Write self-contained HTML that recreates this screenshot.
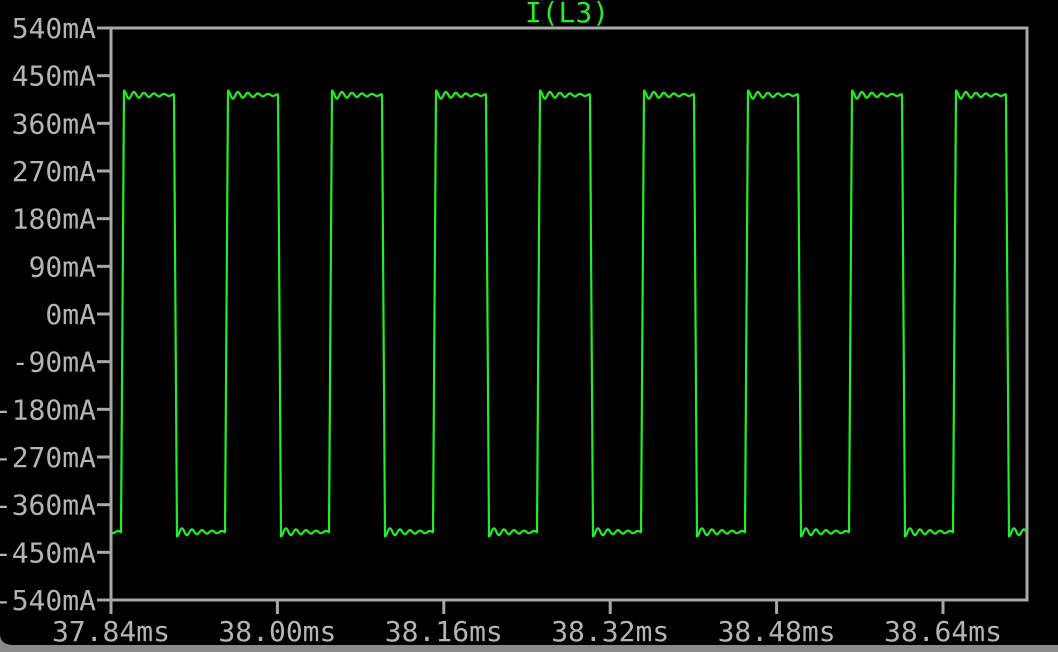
<!DOCTYPE html>
<html><head><style>
html,body{margin:0;padding:0;background:#000;width:1058px;height:652px;overflow:hidden}
svg{display:block}
text{font-family:"DejaVu Sans Mono","Liberation Mono",monospace;font-size:28px;fill:#b4b4b4}
</style></head><body>
<svg width="1058" height="652" viewBox="0 0 1058 652" xmlns="http://www.w3.org/2000/svg">
<rect width="1058" height="652" fill="#000"/>
<path d="M0 645 L1058 645 L1058 652 L0 652 Z" fill="#8a8a8a"/>
<path d="M0 634 Q0 645 14 645 L0 645 Z" fill="#8a8a8a"/>
<text x="567" y="22" text-anchor="middle" style="fill:#22ee22">I(L3)</text>
<g id="ax" stroke="#a8a8a8" stroke-width="3" fill="none">
<rect x="111" y="28" width="916" height="572"/>
</g>
<g id="yl" text-anchor="end"></g>
<g id="xl" text-anchor="middle"></g>
<path id="w" fill="none" stroke="#22ee22" stroke-width="2.2" stroke-linejoin="round"/>
</svg>
<script>
var ns="http://www.w3.org/2000/svg",ax=document.getElementById('ax'),yl=document.getElementById('yl'),xl=document.getElementById('xl');
var labs=["540mA","450mA","360mA","270mA","180mA","90mA","0mA","-90mA","-180mA","-270mA","-360mA","-450mA","-540mA"];
for(var i=0;i<13;i++){var y=28+i*47.667;var l=document.createElementNS(ns,'line');l.setAttribute('x1',97);l.setAttribute('x2',111);l.setAttribute('y1',y);l.setAttribute('y2',y);ax.appendChild(l);
var t=document.createElementNS(ns,'text');t.setAttribute('x',96);t.setAttribute('y',y+10);t.textContent=labs[i];yl.appendChild(t);}
var xs=["37.84ms","38.00ms","38.16ms","38.32ms","38.48ms","38.64ms"];
for(var i=0;i<6;i++){var x=111+i*166.4;var l=document.createElementNS(ns,'line');l.setAttribute('x1',x);l.setAttribute('x2',x);l.setAttribute('y1',600);l.setAttribute('y2',614);ax.appendChild(l);
var t=document.createElementNS(ns,'text');t.setAttribute('x',x);t.setAttribute('y',641);t.textContent=xs[i];xl.appendChild(t);}
var hi=95,lo=532,P=104,r0=124,H=52;
function rip(s){return 4.5*Math.exp(-s/30)*Math.cos((s-1)*2*Math.PI/10);}
var pts=[];
for(var x=112;x<=1026;x+=0.5){
 var ph=((x-r0)%P+P)%P,y;
 if(ph>P-3){var f=(ph-(P-3))/3;y=lo+(hi-4.5-lo)*f;}
 else if(ph<H-2){y=hi-rip(ph+1);}
 else if(ph<H+1){var f=(ph-(H-2))/3;y=hi+(lo+4.5-hi)*f;}
 else y=lo+rip(ph-H);
 pts.push(x.toFixed(1)+" "+y.toFixed(1));
}
document.getElementById('w').setAttribute('d',"M"+pts.join(" L"));
</script>
</body></html>
